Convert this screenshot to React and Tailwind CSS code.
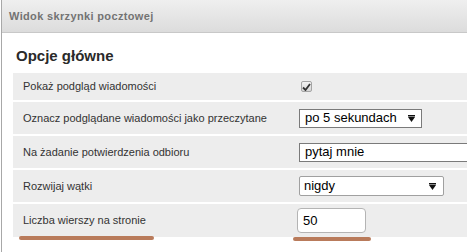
import React from "react";

function Arrow() {
  return (
    <svg width="7" height="7" viewBox="0 0 7 7" className="shrink-0">
      <rect x="0" y="0" width="7" height="1.5" fill="#111" />
      <polygon points="0,2 7,2 3.5,7" fill="#111" />
    </svg>
  );
}

function Row({ label, height, children }) {
  return (
    <div className={`flex items-center bg-[#ededed] ${height}`}>
      <div className="w-[286px] shrink-0 pl-[10px] text-[11px] text-[#333]">
        {label}
      </div>
      <div className="flex items-center">{children}</div>
    </div>
  );
}

export default function App() {
  return (
    <div className="relative h-[252px] w-[467px] overflow-hidden bg-white font-['Liberation_Sans',Arial,sans-serif]">
      <div className="ml-px h-full border-l border-[#a8a8a8]">
        <div className="flex h-[33px] items-center border-b border-[#c8c8c8] bg-gradient-to-b from-[#efefef] to-[#dcdcdc] pl-[7px] text-[11px] font-bold tracking-[0.35px] text-[#737373]">
          Widok skrzynki pocztowej
        </div>
        <div className="flex h-[40px] items-center pl-[14px] pt-[6px] text-[15px] font-bold text-[#2a2a2a]">
          Opcje główne
        </div>
        <div className="ml-[11px] flex flex-col gap-[2px]">
          <Row label="Pokaż podgląd wiadomości" height="h-[27px]">
            <span className="ml-[2px] flex h-[11px] w-[11px] items-center justify-center rounded-[2px] border border-[#a4a4a4] bg-gradient-to-b from-[#f2f2f2] to-[#d6d6d6]">
              <svg width="9" height="8" viewBox="0 0 9 8">
                <path d="M1 4.5 L3.5 7 L8 1" stroke="#333" strokeWidth="1.8" fill="none" />
              </svg>
            </span>
          </Row>
          <Row label="Oznacz podglądane wiadomości jako przeczytane" height="h-[32px]">
            <div className="flex h-[19px] w-[123px] items-center justify-between border border-[#7a7a7a] bg-white pl-[5px] pr-[6px] text-[13px] text-black">
              <span>po 5 sekundach</span>
              <Arrow />
            </div>
          </Row>
          <Row label="Na żadanie potwierdzenia odbioru" height="h-[32px]">
            <div className="flex h-[19px] w-[200px] items-center border border-[#7a7a7a] bg-white pl-[5px] text-[13px] text-black">
              pytaj mnie
            </div>
          </Row>
          <Row label="Rozwijaj wątki" height="h-[32px]">
            <div className="flex h-[20px] w-[145px] items-center justify-between rounded-[2px] border border-[#a0a0a0] bg-white pl-[4px] pr-[7px] text-[13px] text-black">
              <span>nigdy</span>
              <Arrow />
            </div>
          </Row>
          <Row label="Liczba wierszy na stronie" height="h-[33px]">
            <div className="-ml-[2px] flex h-[25px] w-[69px] items-center rounded-[4px] border border-[#b4b4b4] bg-white pl-[5px] text-[13px] text-black">
              50
            </div>
          </Row>
        </div>
      </div>
      <div className="absolute left-[19px] top-[236px] h-[4px] w-[135px] rounded-full bg-[#b97b5b]" />
      <div className="absolute left-[293px] top-[237px] h-[4px] w-[78px] rounded-full bg-[#b97b5b]" />
    </div>
  );
}
